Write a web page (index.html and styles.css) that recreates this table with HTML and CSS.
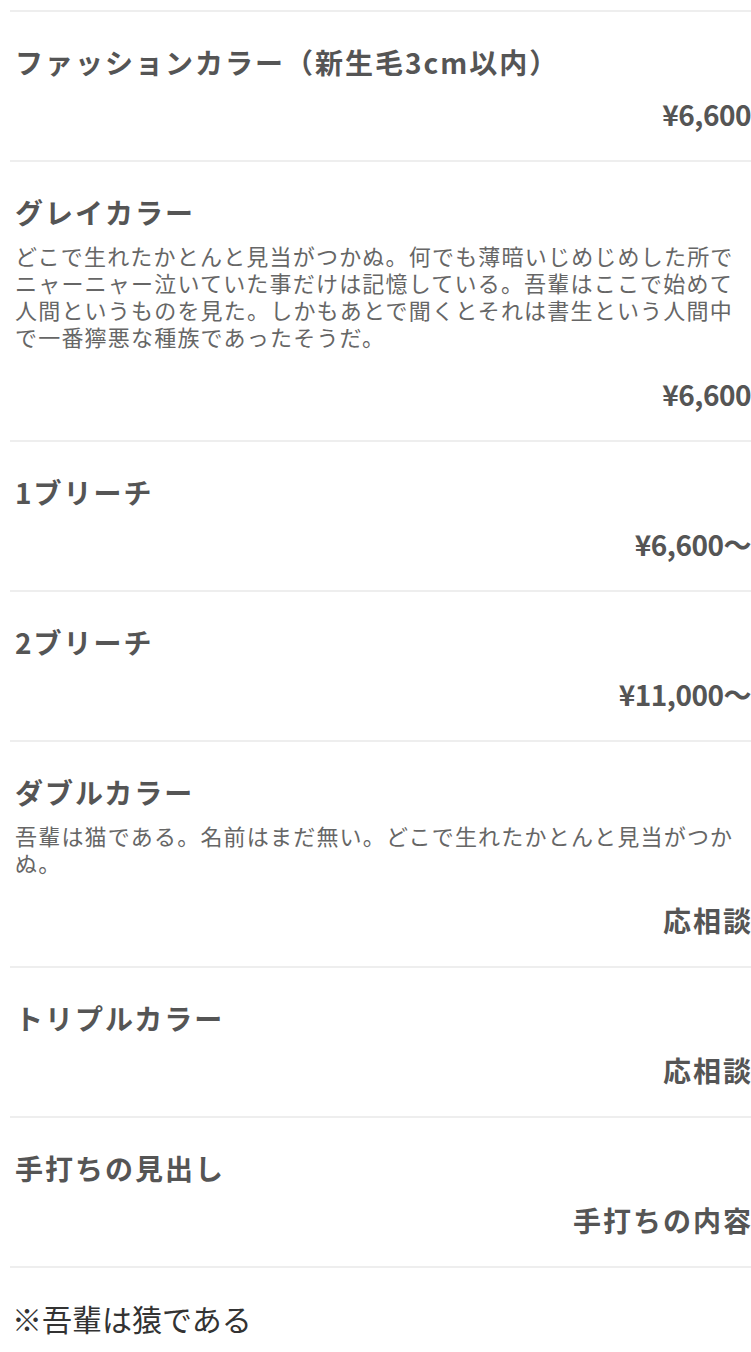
FILE: index.html
```html
<!DOCTYPE html>
<html lang="ja">
<head>
<meta charset="utf-8">
<title>メニュー</title>
<link rel="stylesheet" href="styles.css">
</head>
<body>
<main class="page">
  <ul class="menu">
    <li class="item">
      <h3 class="item-title">ファッションカラー（新生毛3cm以内）</h3>
      <p class="item-price">¥6,600</p>
    </li>
    <li class="item">
      <h3 class="item-title">グレイカラー</h3>
      <p class="item-desc">どこで生れたかとんと見当がつかぬ。何でも薄暗いじめじめした所でニャーニャー泣いていた事だけは記憶している。吾輩はここで始めて人間というものを見た。しかもあとで聞くとそれは書生という人間中で一番獰悪な種族であったそうだ。</p>
      <p class="item-price">¥6,600</p>
    </li>
    <li class="item">
      <h3 class="item-title">1ブリーチ</h3>
      <p class="item-price">¥6,600～</p>
    </li>
    <li class="item">
      <h3 class="item-title">2ブリーチ</h3>
      <p class="item-price">¥11,000～</p>
    </li>
    <li class="item">
      <h3 class="item-title">ダブルカラー</h3>
      <p class="item-desc">吾輩は猫である。名前はまだ無い。どこで生れたかとんと見当がつかぬ。</p>
      <p class="item-price item-price--text">応相談</p>
    </li>
    <li class="item">
      <h3 class="item-title">トリプルカラー</h3>
      <p class="item-price item-price--text">応相談</p>
    </li>
    <li class="item">
      <h3 class="item-title">手打ちの見出し</h3>
      <p class="item-price item-price--text">手打ちの内容</p>
    </li>
  </ul>
  <p class="note">※吾輩は猿である</p>
</main>
</body>
</html>
```

FILE: styles.css
```css
* {
  box-sizing: border-box;
}

html, body {
  margin: 0;
  padding: 0;
  background: #ffffff;
}

body {
  font-family: "Noto Sans CJK JP", "Noto Sans", sans-serif;
  color: #555555;
}

.page {
  padding: 10px 0 14px 10px;
}

.menu {
  list-style: none;
  margin: 0;
  padding: 0;
  border-top: 2px solid #eeeeee;
}

.item {
  display: flex;
  flex-direction: column;
  padding: 30px 0 26px 5px;
  border-bottom: 2px solid #eeeeee;
}

.item-title {
  margin: 0;
  font-size: 28px;
  line-height: 40px;
  font-weight: 700;
  letter-spacing: 2px;
  color: #555555;
}

.item-desc {
  margin: 10px 0 12px;
  font-size: 22px;
  line-height: 27px;
  letter-spacing: 1.2px;
  font-weight: 400;
  color: #666666;
}

.item-price {
  margin: 12px 0 0;
  font-size: 28px;
  line-height: 40px;
  font-weight: 700;
  letter-spacing: -0.5px;
  text-align: right;
  color: #555555;
}

.item-price--text {
  letter-spacing: 2px;
  margin-right: -2px;
}

.note {
  margin: 0;
  padding: 28px 0 0 2px;
  font-size: 30px;
  line-height: 44px;
  font-weight: 400;
  color: #333333;
}
```
